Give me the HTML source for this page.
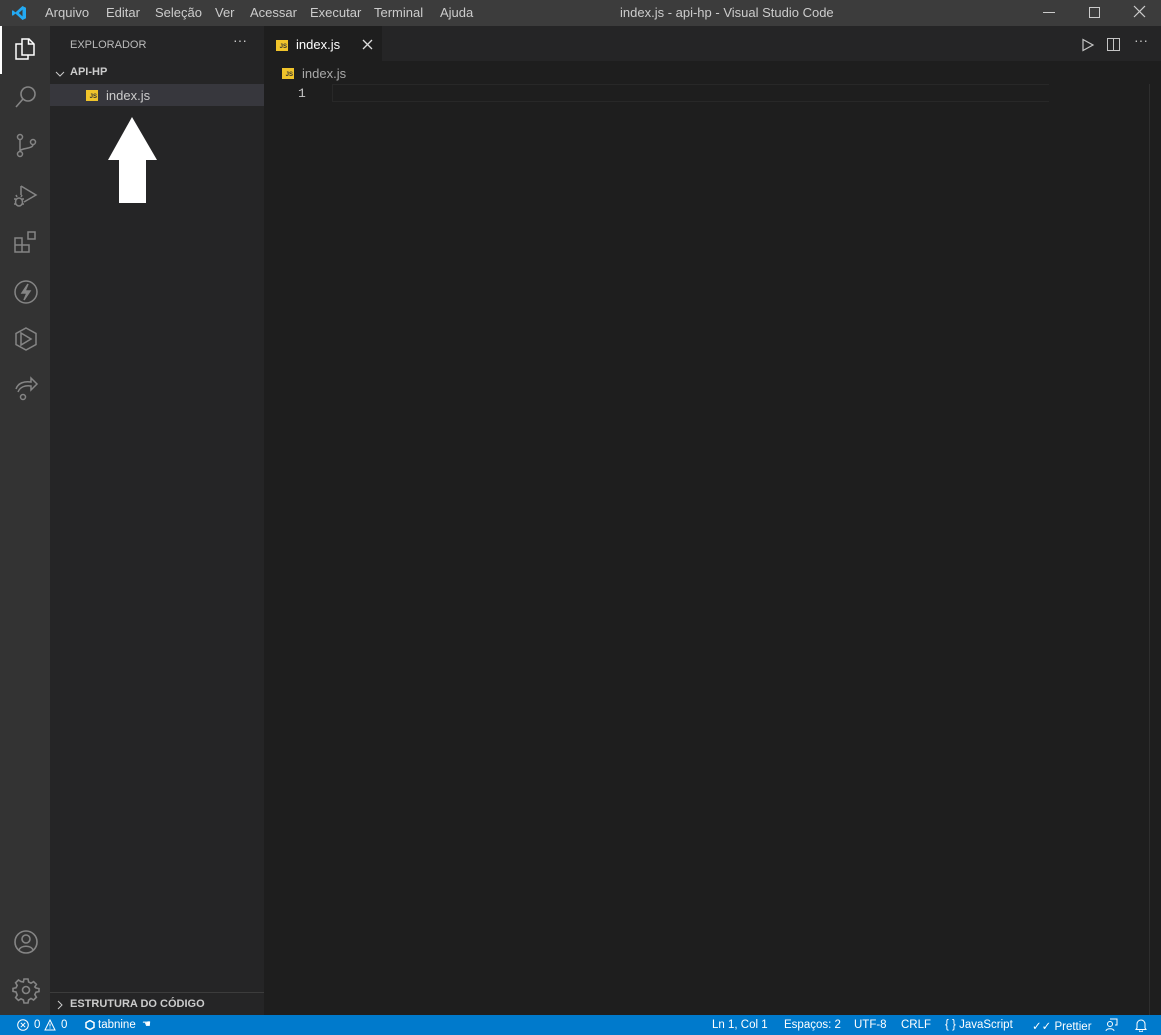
<!DOCTYPE html>
<html><head><meta charset="utf-8"><style>
*{margin:0;padding:0;box-sizing:border-box}
body{width:1161px;height:1035px;background:#1e1e1e;font-family:"Segoe UI","Liberation Sans",sans-serif;color:#ccc;position:relative;overflow:hidden;font-size:13px}
.abs{position:absolute}
#title{left:0;top:0;width:1161px;height:26px;background:#3c3c3c}
#title span.m{position:absolute;top:5px;font-size:13px;color:#ccc}
#act{left:0;top:26px;width:50px;height:989px;background:#333}
#side{left:50px;top:26px;width:214px;height:989px;background:#252526}
#tabs{left:264px;top:26px;width:897px;height:35px;background:#252526}
#status{left:0;top:1015px;width:1161px;height:20px;background:#007acc;color:#fff;font-size:11.5px}
#status span{position:absolute;top:4px}
.js{display:inline-block;width:12px;height:11px;background:#f0c42b;color:#333;font-size:6px;font-weight:bold;text-align:right;line-height:14px;padding-right:1px}
svg{position:absolute}
</style></head><body>
<div id="title" class="abs">
<svg style="left:11px;top:5px" width="16" height="16" viewBox="0 0 16 16"><path d="M11.5 1 L15 2.7 V13.3 L11.5 15 L4.5 8.6 L1.8 10.7 L1 10.2 V5.8 L1.8 5.3 L4.5 7.4 Z M11.5 4.6 L7.8 8 L11.5 11.4 Z" fill="#23a9f2"/></svg>
<span class="m" style="left:45px">Arquivo</span><span class="m" style="left:106px">Editar</span><span class="m" style="left:155px">Seleção</span><span class="m" style="left:215px">Ver</span><span class="m" style="left:250px">Acessar</span><span class="m" style="left:310px">Executar</span><span class="m" style="left:374px">Terminal</span><span class="m" style="left:440px">Ajuda</span>
<span class="m" style="left:620px">index.js - api-hp - Visual Studio Code</span>
<svg style="left:1042px;top:6px" width="14" height="14"><path d="M1 6.5h12" stroke="#ccc"/></svg>
<svg style="left:1088px;top:6px" width="14" height="14"><rect x="1.5" y="1.5" width="10" height="10" fill="none" stroke="#ccc"/></svg>
<svg style="left:1133px;top:5px" width="14" height="14"><path d="M1 1L12 12M12 1L1 12" stroke="#ccc" stroke-width="1.2"/></svg>
</div>
<div id="act" class="abs">
<div class="abs" style="left:0;top:0;width:2px;height:48px;background:#fff"></div>
<svg style="left:13px;top:11px" width="26" height="26" viewBox="0 0 26 26" fill="none" stroke="#fff" stroke-width="1.5"><path d="M9 2h7l5 5v11H9z"/><path d="M15.5 2v5h5"/><path d="M9 7H3v15h12v-4"/></svg>
<svg style="left:13px;top:58px" width="26" height="26" viewBox="0 0 26 26" fill="none" stroke="#858585" stroke-width="1.6"><circle cx="15" cy="10" r="7"/><path d="M10 15L3 23"/></svg>
<svg style="left:13px;top:107px" width="26" height="26" viewBox="0 0 26 26" fill="none" stroke="#858585" stroke-width="1.5"><circle cx="7" cy="4" r="2.5"/><circle cx="7" cy="21" r="2.5"/><circle cx="20" cy="9" r="2.5"/><path d="M7 6.5v12M20 11.5c0 5-13 3-13 7"/></svg>
<svg style="left:12px;top:155px" width="28" height="28" viewBox="0 0 28 28" fill="none" stroke="#858585" stroke-width="1.5"><path d="M9 5L24 14 12 21"/><path d="M9 5v9"/><ellipse cx="7" cy="21" rx="3.5" ry="4"/><path d="M2 18h2M10 18h2M2 23h2M10 23h2M5 16l-1-2M9 16l1-2"/></svg>
<svg style="left:13px;top:204px" width="26" height="26" viewBox="0 0 26 26" fill="none" stroke="#858585" stroke-width="1.5"><path d="M2 8h7v7h7v7H2zM2 15h7v7M9 15v7"/><rect x="15" y="2" width="7" height="7"/></svg>
<svg style="left:12px;top:252px" width="28" height="28" viewBox="0 0 28 28" fill="none" stroke="#858585" stroke-width="1.5"><circle cx="14" cy="14" r="11"/><path d="M16 6l-6 9h5l-3 7 6-9h-5z" fill="#858585"/></svg>
<svg style="left:12px;top:299px" width="28" height="28" viewBox="0 0 28 28" fill="none" stroke="#858585" stroke-width="1.5"><path d="M14 3l10 5.5v11L14 25 4 19.5v-11z"/><path d="M9 8l10 6-10 6z"/></svg>
<svg style="left:12px;top:347px" width="28" height="28" viewBox="0 0 28 28" fill="none" stroke="#858585" stroke-width="1.5"><path d="M4 16c2-6 8-8 15-7V5l6 6-6 6v-4c-6-1-11 1-13 6"/><circle cx="11" cy="24" r="2.5"/></svg>
<svg style="left:12px;top:902px" width="28" height="28" viewBox="0 0 28 28" fill="none" stroke="#858585" stroke-width="1.6"><circle cx="14" cy="14" r="11"/><circle cx="14" cy="11" r="4"/><path d="M7 22c2-5 12-5 14 0"/></svg>
<svg style="left:12px;top:950px" width="28" height="28" viewBox="0 0 28 28" fill="none" stroke="#858585" stroke-width="1.6"><path d="M12 3h4l.6 3 2.4 1.2 2.6-1.6 2.8 2.8-1.6 2.6L24 12l3 .6v3l-3 .6-1.2 2.4 1.6 2.6-2.8 2.8-2.6-1.6L16.6 24l-.6 3h-4l-.6-3-2.4-1.2-2.6 1.6-2.8-2.8 1.6-2.6L4 16l-3-.6v-3l3-.6 1.2-2.4-1.6-2.6 2.8-2.8 2.6 1.6L11.4 6z"/><circle cx="14" cy="14" r="3.5"/></svg>
</div>
<div id="side" class="abs">
<span class="abs" style="left:20px;top:13px;font-size:11px;color:#bbb">EXPLORADOR</span>
<span class="abs" style="left:183px;top:6px;font-size:14px;color:#ccc">···</span>
<svg style="left:4px;top:42px" width="12" height="12"><path d="M2 4l4 4 4-4" fill="none" stroke="#ccc"/></svg>
<span class="abs" style="left:20px;top:40px;font-size:11px;font-weight:bold;color:#ccc">API-HP</span>
<div class="abs" style="left:0;top:58px;width:214px;height:22px;background:#37373d"></div>
<span class="abs js" style="left:36px;top:64px">JS</span>
<span class="abs" style="left:56px;top:62px;color:#ccc">index.js</span>
<svg style="left:58px;top:91px" width="52" height="88"><path d="M24 0L49 43H38V86H11V43H0Z" fill="#fff"/></svg>
<div class="abs" style="left:0;top:966px;width:214px;height:1px;background:#3c3c3c"></div>
<svg style="left:4px;top:973px" width="12" height="12"><path d="M4 2l4 4-4 4" fill="none" stroke="#ccc"/></svg>
<span class="abs" style="left:20px;top:972px;font-size:11px;font-weight:bold;color:#ccc">ESTRUTURA DO CÓDIGO</span>
</div>
<div id="tabs" class="abs">
<div class="abs" style="left:0;top:0;width:118px;height:35px;background:#1e1e1e"></div>
<span class="abs js" style="left:12px;top:14px">JS</span>
<span class="abs" style="left:32px;top:11px;color:#fff;font-size:13px">index.js</span>
<svg style="left:98px;top:13px" width="12" height="12"><path d="M1 1l9 9M10 1l-9 9" stroke="#ddd" stroke-width="1.3"/></svg>
<svg style="left:817px;top:12px" width="14" height="14"><path d="M2 1.5l10 5.5-10 5.5z" fill="none" stroke="#c5c5c5" stroke-width="1.2"/></svg>
<svg style="left:842px;top:11px" width="16" height="16"><rect x="1.5" y="1.5" width="12" height="12" fill="none" stroke="#c5c5c5"/><path d="M7.5 1.5v12" stroke="#c5c5c5"/></svg>
<span class="abs" style="left:870px;top:6px;font-size:14px;color:#c5c5c5">···</span>
</div>
<span class="abs js" style="left:282px;top:68px">JS</span>
<span class="abs" style="left:302px;top:66px;color:#a9a9a9">index.js</span>
<span class="abs" style="left:298px;top:86px;color:#c6c6c6;font-family:'Liberation Mono',monospace;font-size:13px">1</span>
<div class="abs" style="left:332px;top:84px;width:717px;height:18px;border:1px solid #282828;border-right:none"></div>
<div class="abs" style="left:1149px;top:84px;width:1px;height:931px;background:#2e2e2e"></div>
<div id="status" class="abs">
<svg style="left:17px;top:4px" width="12" height="12"><circle cx="6" cy="6" r="5.3" fill="none" stroke="#fff"/><path d="M3.8 3.8l4.4 4.4M8.2 3.8l-4.4 4.4" stroke="#fff"/></svg>
<span style="left:34px">0</span>
<svg style="left:44px;top:4px" width="12" height="12"><path d="M6 1l5 10H1z" fill="none" stroke="#fff"/><path d="M6 4.5v3M6 8.5v1" stroke="#fff"/></svg>
<span style="left:61px">0</span>
<svg style="left:85px;top:5px" width="10" height="10"><path d="M5 0.5l4 2.2v4.6L5 9.5 1 7.3V2.7z" fill="none" stroke="#fff" stroke-width="1.5"/></svg>
<span style="left:98px">tabnine</span>
<span style="left:142px;font-size:10px">☚</span>
<span style="left:712px">Ln 1, Col 1</span>
<span style="left:784px">Espaços: 2</span>
<span style="left:854px">UTF-8</span>
<span style="left:901px">CRLF</span>
<span style="left:945px">{ }&nbsp;JavaScript</span>
<span style="left:1032px">✓✓ Prettier</span>
<svg style="left:1104px;top:3px" width="14" height="14"><circle cx="6" cy="6" r="2.5" fill="none" stroke="#fff"/><path d="M2 13c0-3 8-3 8 0M6 1h7v6h-2" fill="none" stroke="#fff"/></svg>
<svg style="left:1134px;top:3px" width="14" height="14"><path d="M3 10V6a4 4 0 0 1 8 0v4l1 1.5H2zM5.5 12.5a1.5 1.5 0 0 0 3 0" fill="none" stroke="#fff"/></svg>
</div>
</body></html>
